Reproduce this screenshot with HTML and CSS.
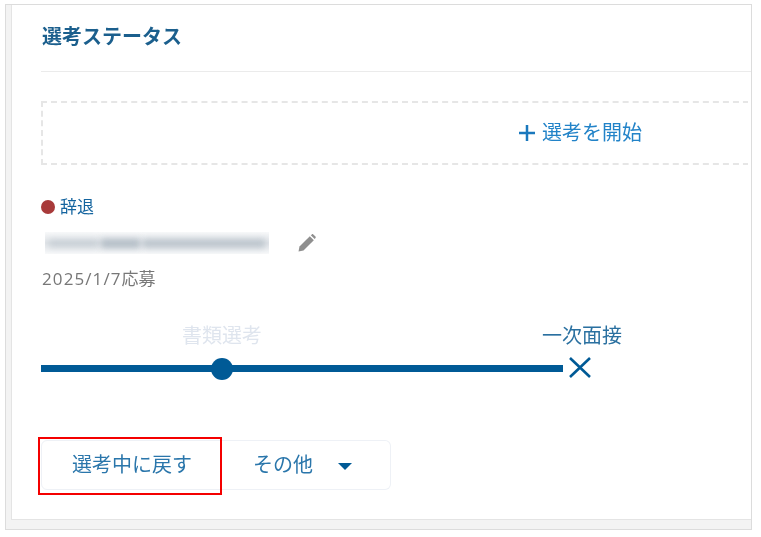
FILE: index.html
```html
<!DOCTYPE html>
<html lang="ja">

<head>
    <meta charset="UTF-8">
    <title>選考ステータス</title>
    <link rel="stylesheet" href="styles.css">
</head>

<body>
    <div class="frame">
        <div class="panel">
            <h2 class="title"><span class="title-text">選考ステータス</span></h2>
            <div class="content">
                <div class="start-wrap">
                    <div class="start-box">
                        <svg class="plus" width="16" height="16" viewBox="0 0 16 16">
                            <path d="M8 0v16M0 8h16" stroke="#1a78bd" stroke-width="2.5" fill="none" />
                        </svg>
                        <span class="start-text">選考を開始</span>
                    </div>
                </div>

                <div class="status">
                    <span class="dot"></span>
                    <span class="status-text">辞退</span>
                </div>
                <div class="name-row">
                    <div class="redacted">
                        <span class="smear s1"></span>
                        <span class="smear s2"></span>
                        <span class="smear s3"></span>
                    </div>
                    <svg class="pencil" width="18" height="18" viewBox="0 0 18 18">
                        <path d="M0.5 17.5l1-5L11.8 2.2l4 4L5.5 16.5z" fill="#8f8f8f" />
                        <path d="M12.8 1.2l1-0.8c0.5-0.4 1-0.4 1.5 0l2.2 2.2c0.4 0.5 0.4 1 0 1.5l-0.8 1z" fill="#8f8f8f" />
                    </svg>
                </div>
                <div class="date"><span class="date-num">2025/1/7</span>応募</div>

                <div class="labels">
                    <span class="label done">書類選考</span>
                    <span class="label">一次面接</span>
                </div>
                <div class="track">
                    <div class="bar"><span class="knob"></span></div>
                    <svg class="cross" width="24" height="24" viewBox="0 0 24 24">
                        <path d="M3 3l20 19M23 3L3 22" stroke="#005a96" stroke-width="2.6" fill="none" />
                    </svg>
                </div>

                <div class="actions">
                    <div class="btn btn-back">選考中に戻す</div>
                    <div class="btn btn-more">
                        <span>その他</span>
                        <span class="caret"></span>
                    </div>
                </div>
            </div>
        </div>
    </div>
</body>

</html>
```

FILE: styles.css
```css
* {
    box-sizing: border-box;
}

body {
    margin: 0;
    background-color: white;
    font-family: "Open Sans", "Noto Sans CJK JP", sans-serif;
}

.frame {
    width: 747px;
    height: 526px;
    margin: 4px 0 0 5px;
    padding: 0 0 9px 5px;
    background-color: #f3f3f3;
    border: 1px solid #dcdcdc;
}

.panel {
    height: 100%;
    background-color: white;
    border-left: 1px solid #e4e4e4;
    border-bottom: 1px solid #e4e4e4;
    overflow: hidden;
    filter: blur(.3px);
}

.title {
    height: 67px;
    margin: 0 0 0 29px;
    border-bottom: 1px solid #ebebeb;
    color: #1b5f8d;
    font-size: 20px;
    font-weight: bold;
    line-height: 63px;
}

.title-text {
    margin-left: 1px;
}

.content {
    padding: 29px 0 0 29px;
}

.start-wrap {
    width: 707px;
    overflow: hidden;
}

.start-box {
    display: flex;
    justify-content: center;
    align-items: center;
    gap: 7px;
    width: 1079px;
    height: 64px;
    border: 2px dashed #e6e6e6;
    color: #2283c8;
    font-size: 20px;
}

.start-text {
    margin-top: -4px;
}

.plus {
    margin-top: -1px;
}

.status {
    display: flex;
    align-items: center;
    gap: 5px;
    margin-top: 31px;
    height: 22px;
}

.dot {
    width: 14px;
    height: 14px;
    border-radius: 50%;
    background-color: #a83a3a;
}

.status-text {
    margin-top: -4px;
    color: #14649f;
    font-size: 17px;
}

.name-row {
    display: flex;
    align-items: center;
    gap: 29px;
    margin: 14px 0 0 4px;
    height: 22px;
}

.redacted {
    display: flex;
    align-items: center;
    gap: 3px;
    width: 224px;
    height: 22px;
    padding: 0 4px;
    background: linear-gradient(#f8f9fa, #dfe3e7 50%, #f8f9fa);
    overflow: hidden;
}

.smear {
    height: 9px;
    background-color: #b4bec7;
    filter: blur(3px);
}

.s1 {
    width: 50px;
    opacity: .5;
}

.s2 {
    width: 40px;
}

.s3 {
    width: 125px;
    opacity: .8;
}

.date {
    margin: 13px 0 0 1px;
    color: #777;
    font-size: 17px;
    line-height: 24px;
}

.date-num {
    letter-spacing: 1.1px;
}

.labels {
    display: grid;
    grid-template-columns: 360px 360px;
    margin-top: 30px;
    padding-left: 1px;
    font-size: 20px;
    line-height: 30px;
    text-align: center;
    color: #2a70a0;
}

.done {
    color: #dfe5ee;
}

.track {
    display: flex;
    align-items: center;
    gap: 4px;
    height: 24px;
    margin-top: 5px;
}

.bar {
    position: relative;
    width: 522px;
    height: 7px;
    background-color: #005a96;
}

.knob {
    position: absolute;
    left: 170px;
    top: -7px;
    width: 22px;
    height: 22px;
    border-radius: 50%;
    background-color: #005a96;
}

.cross {
    margin-top: -3px;
}

.actions {
    display: flex;
    margin-top: 60px;
}

.btn {
    display: flex;
    justify-content: center;
    align-items: center;
    height: 50px;
    padding-bottom: 4px;
    background-color: white;
    border: 1px solid #eef1f6;
    color: #2a76ab;
    font-size: 20px;
}

.btn-back {
    position: relative;
    width: 180px;
    padding-left: 2px;
    border-radius: 6px 0 0 6px;
}

/* red annotation drawn round the button */
.btn-back::after {
    content: "";
    position: absolute;
    left: -4px;
    top: -4px;
    box-sizing: border-box;
    width: 184px;
    height: 58px;
    border: 2.5px solid #f40000;
}

.btn-more {
    gap: 25px;
    width: 170px;
    padding-right: 6px;
    border-left: none;
    border-radius: 0 6px 6px 0;
}

.caret {
    width: 0;
    height: 0;
    margin-top: 7px;
    border-left: 7px solid transparent;
    border-right: 7px solid transparent;
    border-top: 7px solid #005a96;
}
```
